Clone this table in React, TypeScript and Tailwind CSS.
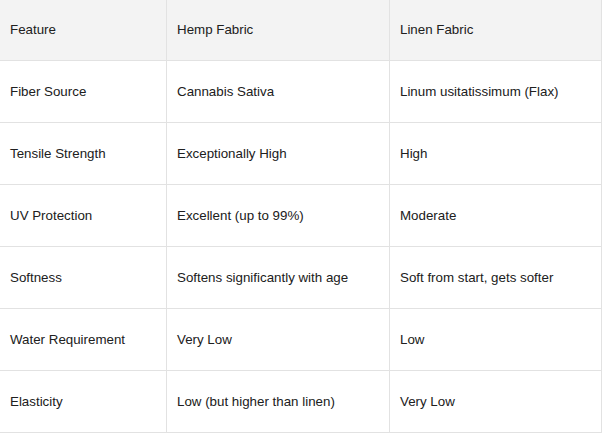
import React from "react";

const rows = [
  ["Fiber Source", "Cannabis Sativa", "Linum usitatissimum (Flax)"],
  ["Tensile Strength", "Exceptionally High", "High"],
  ["UV Protection", "Excellent (up to 99%)", "Moderate"],
  ["Softness", "Softens significantly with age", "Soft from start, gets softer"],
  ["Water Requirement", "Very Low", "Low"],
  ["Elasticity", "Low (but higher than linen)", "Very Low"],
];

const header = ["Feature", "Hemp Fabric", "Linen Fabric"];

export default function App() {
  const cell = "px-[10px] border-r border-b border-[#e2e2e2] flex items-center";
  return (
    <div className="w-[602px] bg-white text-[13.33px] text-[#202020] font-['Liberation_Sans',Arial,sans-serif]">
      <div className="grid grid-cols-[167px_223px_212px]">
        {header.map((h) => (
          <div key={h} className={`${cell} h-[62px] -mt-px pt-px bg-[#f3f3f3]`}>
            {h}
          </div>
        ))}
        {rows.map((r) =>
          r.map((c, i) => (
            <div key={r[0] + i} className={`${cell} h-[62px]`}>
              {c}
            </div>
          ))
        )}
      </div>
    </div>
  );
}
